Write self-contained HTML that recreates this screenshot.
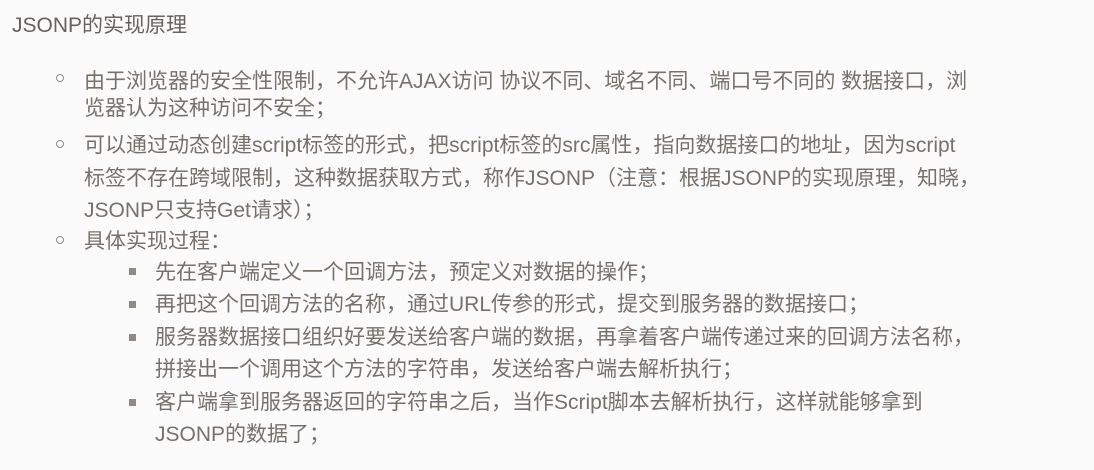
<!DOCTYPE html>
<html><head><meta charset="utf-8"><style>
body{margin:0;width:1094px;height:470px;background:#fbfbfb;overflow:hidden;position:relative;
font-family:"Liberation Sans","Microsoft YaHei","Noto Sans CJK SC",sans-serif;color:#77716c;}
.l{position:absolute;white-space:nowrap;font-size:21px;line-height:26px;}
.t{font-size:21px;color:#67625e}
.c{position:absolute;width:6px;height:6px;border:1.5px solid #8f8a85;border-radius:50%}
.s{position:absolute;width:7px;height:7px;background:#908a84}
</style></head><body>
<div class="l t" style="left:12px;top:13px">JSONP的实现原理</div>
<div class="c" style="left:56px;top:74px"></div>
<div class="l" style="left:84px;top:69px">由于浏览器的安全性限制，不允许AJAX访问 协议不同、域名不同、端口号不同的 数据接口，浏</div>
<div class="l" style="left:84px;top:96px">览器认为这种访问不安全；</div>
<div class="c" style="left:56px;top:140px"></div>
<div class="l" style="left:84px;top:133px">可以通过动态创建script标签的形式，把script标签的src属性，指向数据接口的地址，因为script</div>
<div class="l" style="left:84px;top:166px">标签不存在跨域限制，这种数据获取方式，称作JSONP（注意：根据JSONP的实现原理，知晓，</div>
<div class="l" style="left:84px;top:198px">JSONP只支持Get请求）；</div>
<div class="c" style="left:56px;top:236px"></div>
<div class="l" style="left:84px;top:229px">具体实现过程：</div>
<div class="s" style="left:129px;top:268px"></div>
<div class="l" style="left:155px;top:260px">先在客户端定义一个回调方法，预定义对数据的操作；</div>
<div class="s" style="left:129px;top:301px"></div>
<div class="l" style="left:155px;top:292px">再把这个回调方法的名称，通过URL传参的形式，提交到服务器的数据接口；</div>
<div class="s" style="left:129px;top:334px"></div>
<div class="l" style="left:155px;top:325px">服务器数据接口组织好要发送给客户端的数据，再拿着客户端传递过来的回调方法名称，</div>
<div class="l" style="left:155px;top:357px">拼接出一个调用这个方法的字符串，发送给客户端去解析执行；</div>
<div class="s" style="left:129px;top:399px"></div>
<div class="l" style="left:155px;top:390px">客户端拿到服务器返回的字符串之后，当作Script脚本去解析执行，这样就能够拿到</div>
<div class="l" style="left:155px;top:422px">JSONP的数据了；</div>
</body></html>
